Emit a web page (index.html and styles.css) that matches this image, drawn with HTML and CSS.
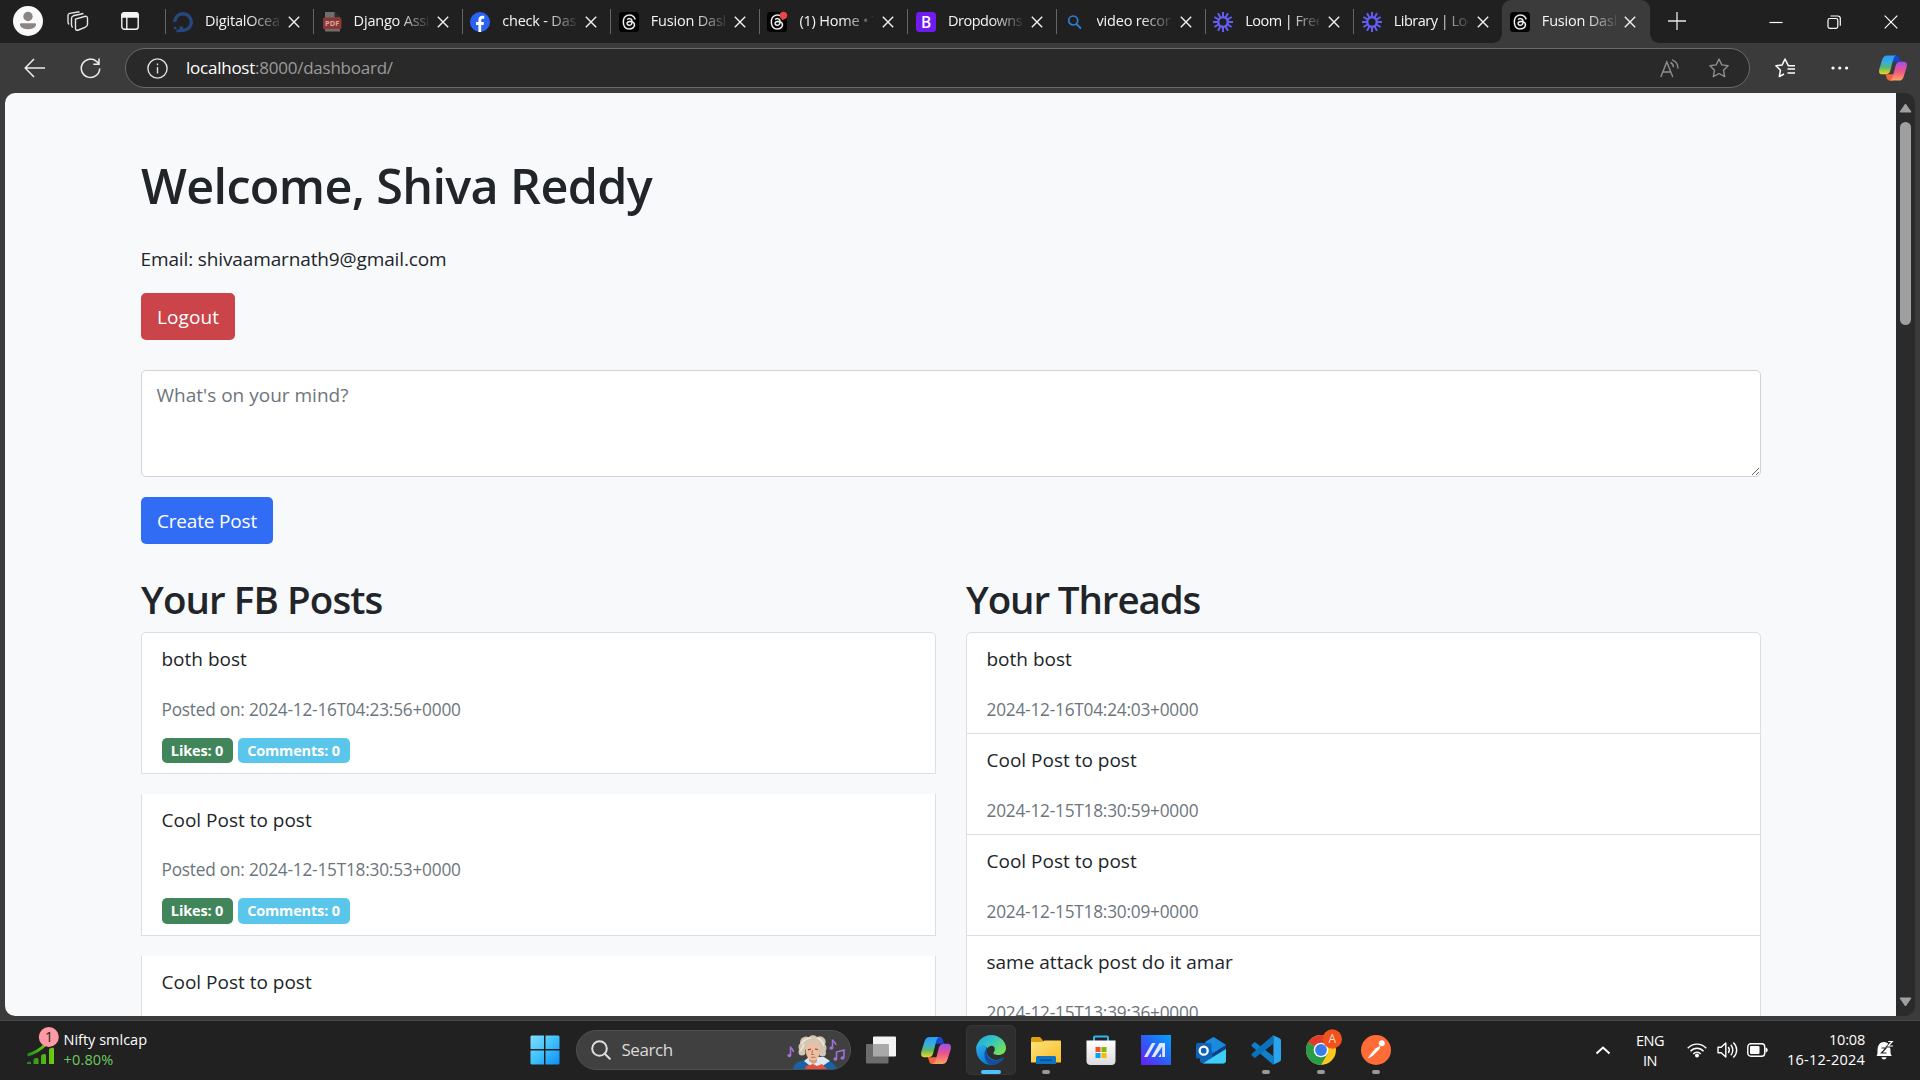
FILE: index.html
```html
<!DOCTYPE html>
<html lang="en">
<head>
<meta charset="utf-8">
<title>Fusion Dashboard</title>
<link rel="stylesheet" href="styles.css">
</head>
<body>
<svg class="defs" width="0" height="0" aria-hidden="true">
  <defs>
    <linearGradient id="cpLeft" x1="0" y1="0" x2="0" y2="1"><stop offset="0" stop-color="#2b9cf5"/><stop offset=".35" stop-color="#35aee0"/><stop offset=".65" stop-color="#5cb96b"/><stop offset="1" stop-color="#f5d61e"/></linearGradient>
    <linearGradient id="cpRight" x1="0" y1="0" x2="0" y2="1"><stop offset="0" stop-color="#9a50f0"/><stop offset=".5" stop-color="#ef5488"/><stop offset="1" stop-color="#fba55e"/></linearGradient>
    <linearGradient id="win" x1="0" y1="0" x2="1" y2="1"><stop offset="0" stop-color="#82deff"/><stop offset=".5" stop-color="#3fc1fb"/><stop offset="1" stop-color="#0d8df5"/></linearGradient>
    <linearGradient id="edTop" x1="0" y1="0" x2="1" y2=".7"><stop offset="0" stop-color="#1ba5dc"/><stop offset=".5" stop-color="#35c4c5"/><stop offset="1" stop-color="#76e352"/></linearGradient>
    <linearGradient id="edBase" x1="0" y1="0" x2=".6" y2="1"><stop offset="0" stop-color="#2fb2ee"/><stop offset="1" stop-color="#0a6fcc"/></linearGradient>
    <linearGradient id="fold" x1="0" y1="0" x2="1" y2="1"><stop offset="0" stop-color="#ffe37c"/><stop offset="1" stop-color="#f8bd27"/></linearGradient>
    <linearGradient id="mea" x1="1" y1="0" x2="0" y2="1"><stop offset="0" stop-color="#02a3fb"/><stop offset=".5" stop-color="#2a60f4"/><stop offset="1" stop-color="#6a1bfa"/></linearGradient>
    <linearGradient id="stk" x1="0" y1="0" x2="1" y2="0"><stop offset="0" stop-color="#1d8a1d"/><stop offset="1" stop-color="#6fce0d"/></linearGradient>
    <linearGradient id="bag" x1="0" y1="0" x2="0" y2="1"><stop offset="0" stop-color="#fff"/><stop offset="1" stop-color="#dcdcdc"/></linearGradient>
  </defs>
  <symbol id="threads" viewBox="0 0 20 20"><rect width="20" height="20" rx="3.500" fill="#000"/><path transform="translate(2.8 2.4) scale(.93 .95)" fill="#f4f4f4" stroke="#f4f4f4" stroke-width=".2" d="M6.321 6.016c-.27-.18-1.166-.802-1.166-.802.756-1.081 1.753-1.502 3.132-1.502.975 0 1.803.327 2.394.948s.928 1.509 1.005 2.644q.492.207.905.484c1.109.745 1.719 1.86 1.719 3.137 0 2.716-2.226 5.075-6.256 5.075C4.594 16 1 13.987 1 7.994 1 2.034 4.482 0 8.044 0 9.69 0 13.55.243 15 5.036l-1.36.353C12.516 1.974 10.163 1.43 8.006 1.43c-3.565 0-5.582 2.171-5.582 6.79 0 4.143 2.254 6.343 5.63 6.343 2.777 0 4.847-1.443 4.847-3.556 0-1.438-1.208-2.127-1.27-2.127-.236 1.234-.868 3.31-3.644 3.31-1.618 0-3.013-1.118-3.013-2.582 0-2.09 1.984-2.847 3.55-2.847.586 0 1.294.04 1.663.114 0-.637-.54-1.728-1.9-1.728-1.25 0-1.566.405-1.967.868ZM8.716 8.19c-2.04 0-2.304.87-2.304 1.416 0 .878 1.043 1.168 1.6 1.168 1.02 0 2.067-.282 2.232-2.423a6.2 6.2 0 0 0-1.528-.161"/></symbol>
  <symbol id="loom" viewBox="0 0 20 20"><g fill="none" stroke="#625df5" stroke-width="2"><path d="M10 0v6.2M10 13.8V20M0 10h6.2M13.8 10H20"/><path d="M10 0v6.2M10 13.8V20M0 10h6.2M13.8 10H20" transform="rotate(30 10 10)"/><path d="M10 0v6.2M10 13.8V20M0 10h6.2M13.8 10H20" transform="rotate(60 10 10)"/><circle cx="10" cy="10" r="4.8" stroke-width="2.200"/></g></symbol>
  <symbol id="x" viewBox="0 0 12 12"><path d="M.8.8l10.400 10.400M11.200.8L.8 11.200" fill="none" stroke="#f2f2f2" stroke-width="1.400"/></symbol>
  <symbol id="copilot" viewBox="0 0 30 27"><path d="M15 0h3.500c2.500 0 3.200 2 4.500 6.800H14z" fill="#1746d2"/><path d="M15 27h-3.500c-2.500 0-3.200-2-4.500-6.800H16z" fill="#f4643c"/><path d="M9 0h9.500c-2.500.5-3 3-4 7l-2.300 9c-1 3.500-2.700 4.300-5.700 4.300H3.300C0 20.300-.5 17.500.5 14L3.500 4.500C4.600 1.200 6 0 9 0z" fill="url(#cpLeft)"/><path d="M21 27h-9.500c2.500-.5 3-3 4-7l2.300-9c1-3.500 2.700-4.300 5.700-4.300h3.200c3.300 0 3.800 2.800 2.800 6.300l-3 9.500C25.400 25.800 24 27 21 27z" fill="url(#cpRight)"/></symbol>
</svg>

<div class="tabstrip">
  <div class="strip-tools">
    <svg width="30" height="30" viewBox="0 0 30 30"><circle cx="15" cy="15" r="15" fill="#fafafa"/><circle cx="15" cy="10.500" r="4.700" fill="#8b8684"/><path d="M8 17.200h14c1 0 1.200 1 .8 2.300C21.900 22 19 23.300 15 23.300S8.100 22 7.200 19.500c-.4-1.300-.2-2.300.8-2.300z" fill="#8b8684"/></svg>
    <svg width="22" height="20" viewBox="0 0 22 20" fill="none" stroke="#e6e6e6" stroke-width="1.400"><path d="M8.500 8.200l9-2.700c2-.6 3 0 3 1.800v6c0 1.500-.7 2.300-2 2.800l-7 2.900c-2 .8-3 0-3-1.800z"/><path d="M5.800 16.300c-1-.4-1.300-1-1.300-2.300V7.200c0-1.300.6-2 1.800-2.400L16.500 2.500"/><path d="M2.200 13.300c-.9-.5-1.200-1.200-1.200-2.300V4.500c0-1.200.5-1.800 1.700-2.100L12.500.8"/></svg>
    <svg width="18" height="18" viewBox="0 0 18 18" fill="none" stroke="#f4f4f4" stroke-width="1.400"><rect x=".8" y=".8" width="16.400" height="16.400" rx="2.500"/><path d="M1 2.800C1 1.500 1.700 1 3 1h12c1.300 0 2 .5 2 1.800V5H1z" fill="#f4f4f4"/><path d="M5.800 5v12"/></svg>
  </div>
  <div class="tabs">
    <div class="tab"><svg class="fav" viewBox="0 0 20 20"><path d="M10 18.300a8.300 8.300 0 1 0-8.300-8.300" fill="none" stroke="#26477f" stroke-width="3.400"/><path d="M6.300 14.500H10V20H6.300zM3.400 17.400h2.900v2.800H3.400zM1 14.800h2.400v2.400H1z" fill="#26477f"/></svg><span class="title">DigitalOcean</span><svg class="close"><use href="#x"/></svg></div>
    <div class="tab"><svg class="fav" viewBox="0 0 20 20"><path d="M3 0h9.500L18 5.500V19.500H3z" fill="#6e6e6e"/><path d="M12.500 0L18 5.500h-5.500z" fill="#2b2b2b"/><rect x="1" y="5.500" width="18.500" height="11.500" rx="1.500" fill="#8d3632"/><text x="10.200" y="14" text-anchor="middle" font-size="7.500" font-weight="700" fill="#cfa9a7">PDF</text></svg><span class="title">Django Assignment</span><svg class="close"><use href="#x"/></svg></div>
    <div class="tab"><svg class="fav" viewBox="0 0 20 20"><circle cx="10" cy="10" r="10" fill="#2a62f4"/><path d="M8.400 20v-6.900H6V10h2.400V8.300c0-3 1.300-4.500 4.200-4.500.5 0 1.200.1 1.600.2v2.700h-1.300c-1.300 0-1.700.5-1.700 1.800V10h2.800l-.5 3.100h-2.300V20z" fill="#fff"/></svg><span class="title">check - Dashboard</span><svg class="close"><use href="#x"/></svg></div>
    <div class="tab"><svg class="fav"><use href="#threads"/></svg><span class="title">Fusion Dashboard</span><svg class="close"><use href="#x"/></svg></div>
    <div class="tab"><svg class="fav" viewBox="0 0 20 20"><use href="#threads"/><circle cx="16.500" cy="3.500" r="3.700" fill="#ee4545"/></svg><span class="title">(1) Home • Threads</span><svg class="close"><use href="#x"/></svg></div>
    <div class="tab"><svg class="fav" viewBox="0 0 20 20"><rect width="20" height="20" rx="3.500" fill="#6f1bf2"/><text x="10" y="15.700" text-anchor="middle" font-size="15.500" font-weight="600" fill="#fff">B</text></svg><span class="title tight">Dropdowns</span><svg class="close"><use href="#x"/></svg></div>
    <div class="tab"><svg class="fav" viewBox="0 0 20 20"><circle cx="8.200" cy="8.500" r="4.500" fill="none" stroke="#2f7fd0" stroke-width="1.700"/><path d="M11.300 11.800l4.700 4.700" stroke="#2f7fd0" stroke-width="1.900"/></svg><span class="title">video recorder</span><svg class="close"><use href="#x"/></svg></div>
    <div class="tab"><svg class="fav"><use href="#loom"/></svg><span class="title tight">Loom | Free Screen</span><svg class="close"><use href="#x"/></svg></div>
    <div class="tab"><svg class="fav"><use href="#loom"/></svg><span class="title tight">Library | Loom</span><svg class="close"><use href="#x"/></svg></div>
    <div class="tab active"><svg class="fav"><use href="#threads"/></svg><span class="title">Fusion Dashboard</span><svg class="close"><use href="#x"/></svg></div>
  </div>
  <svg class="plus" width="18" height="18" viewBox="0 0 18 18"><path d="M9 0v18M0 9h18" stroke="#e8e8e8" stroke-width="1.300"/></svg>
  <div class="winctl">
    <svg width="14" height="14" viewBox="0 0 14 14"><path d="M.5 7.500h13" stroke="#fff" stroke-width="1.200"/></svg>
    <svg width="14" height="14" viewBox="0 0 14 14" fill="none" stroke="#fff" stroke-width="1.200"><rect x="1" y="3.500" width="9.800" height="9.800" rx="1.800"/><path d="M3.500 1h7.300c1.500 0 2.500 1 2.500 2.500v7.300"/></svg>
    <svg width="14" height="14" viewBox="0 0 14 14"><path d="M.7.7l12.600 12.600M13.300.7L.7 13.300" stroke="#fff" stroke-width="1.200"/></svg>
  </div>
</div>

<div class="toolbar">
  <svg class="back" width="21" height="20" viewBox="0 0 21 20" fill="none" stroke="#ededed" stroke-width="1.500"><path d="M10 1L1.200 10l8.800 9M1.200 10H21"/></svg>
  <svg class="reload" width="21" height="21" viewBox="0 0 21 21" fill="none" stroke="#ededed" stroke-width="1.500"><path d="M19.700 10.500A9.200 9.200 0 1 1 17.200 4l1.500 1.700M19 .5v5.700h-5.700"/></svg>
  <div class="address">
    <svg width="21" height="21" viewBox="0 0 21 21" fill="none" stroke="#e2e2e2" stroke-width="1.400"><circle cx="10.500" cy="10.500" r="9.600"/><path d="M10.500 9v6.500M10.500 5.500v1.700"/></svg>
    <span class="url"><b>localhost</b>:8000/dashboard/</span>
    <svg class="read" width="20" height="19" viewBox="0 0 20 19" fill="none" stroke="#8e8e8e" stroke-width="1.400"><path d="M.8 18L6.800 3l6 15M3 13h7.700M10.500 3.500c2 1 3 2.700 3 4.800M12 .8c4 1.500 6 4.400 6 8.700"/></svg>
    <svg width="20" height="20" viewBox="0 0 20 20" fill="none" stroke="#8e8e8e" stroke-width="1.400" stroke-linejoin="round"><path d="M10 1l2.800 5.900 6.300.8-4.600 4.500 1.200 6.400L10 15.500l-5.700 3.100 1.200-6.400L.9 7.700l6.300-.8z"/></svg>
  </div>
  <svg class="favs" width="21" height="20" viewBox="0 0 21 20" fill="none" stroke="#fff" stroke-width="1.500" stroke-linejoin="round"><path d="M20 7.700h-6.700L10 1 7.200 6.900l-6.300.8 4.600 4.500-1.200 6.400L9 16M12.500 11H20M12.500 15H20"/></svg>
  <svg class="dots" width="18" height="4" viewBox="0 0 18 4" fill="#fff"><circle cx="2" cy="2" r="1.600"/><circle cx="8.800" cy="2" r="1.600"/><circle cx="15.600" cy="2" r="1.600"/></svg>
  <svg class="cop" width="28" height="26"><use href="#copilot"/></svg>
</div>

<div class="viewport">
  <main class="page">
    <h1>Welcome, Shiva Reddy</h1>
    <p class="email">Email: shivaamarnath9@gmail.com</p>
    <button class="btn danger">Logout</button>
    <textarea class="composer" placeholder="What's on your mind?"></textarea>
    <button class="btn primary">Create Post</button>
    <div class="columns">
      <section>
        <h2>Your FB Posts</h2>
        <ul class="list posts">
          <li><p>both bost</p><small>Posted on: 2024-12-16T04:23:56+0000</small><div class="badges"><span class="badge likes">Likes: 0</span><span class="badge comments">Comments: 0</span></div></li>
          <li><p>Cool Post to post</p><small>Posted on: 2024-12-15T18:30:53+0000</small><div class="badges"><span class="badge likes">Likes: 0</span><span class="badge comments">Comments: 0</span></div></li>
          <li><p>Cool Post to post</p></li>
        </ul>
      </section>
      <section>
        <h2 class="narrow">Your Threads</h2>
        <ul class="list threads">
          <li><p>both bost</p><small>2024-12-16T04:24:03+0000</small></li>
          <li><p>Cool Post to post</p><small>2024-12-15T18:30:59+0000</small></li>
          <li><p>Cool Post to post</p><small>2024-12-15T18:30:09+0000</small></li>
          <li><p>same attack post do it amar</p><small>2024-12-15T13:39:36+0000</small></li>
        </ul>
      </section>
    </div>
  </main>
  <div class="scrollbar">
    <svg width="13" height="10" viewBox="0 0 13 10"><path d="M6.500 1L12 9H1z" fill="#a0a0a0" stroke="#a0a0a0" stroke-linejoin="round"/></svg>
    <div class="thumb"></div>
    <svg width="13" height="10" viewBox="0 0 13 10"><path d="M6.500 9L12 1H1z" fill="#a0a0a0" stroke="#a0a0a0" stroke-linejoin="round"/></svg>
  </div>
</div>

<footer class="taskbar">
  <div class="widget">
    <svg width="34" height="38" viewBox="0 0 34 38"><path d="M1.500 28C9 26 15 22 20 17" fill="none" stroke="url(#stk)" stroke-width="3"/><path d="M1 37v-1c0-1.500 4-2 4 0v1zM7.500 37v-4c0-2 5-3 5-.5V37zM15 37v-8c0-2 5-3 5-.5V37zM23 37V22.500c0-1.500 5-3 5-.5v15z" fill="url(#stk)"/><circle cx="22.800" cy="10" r="10" fill="#ff99a4"/><text x="23" y="15" text-anchor="middle" font-size="14" fill="#222">1</text></svg>
    <div class="quote"><span>Nifty smlcap</span><span class="up">+0.80%</span></div>
  </div>
  <svg class="start" width="30" height="30" viewBox="0 0 30 30"><path d="M1.500.5H14V14H.5V1.500zM15.500.5h13l1 1V14h-14zM.5 15.500H14v14H1.500l-1-1zM15.500 15.500h14v13l-1 1h-13z" fill="url(#win)"/></svg>
  <div class="search">
    <svg width="20" height="20" viewBox="0 0 20 20" fill="none" stroke="#dedede" stroke-width="2"><circle cx="8.500" cy="8.500" r="7.300"/><path d="M13.800 13.800l5 5" stroke-linecap="round"/></svg>
    <span>Search</span>
    <svg class="composerpic" width="58" height="34" viewBox="0 0 58 34">
      <path d="M6 34c1-6 6-8 12-9h20c6 1 10 4 12 9z" fill="#1763a4"/><path d="M17 26l10 8h4l12-8-6-4H22z" fill="#dce9f4"/><path d="M19 31l7-2 4 2 5-2 5 5H18z" fill="#e4503a"/>
      <g fill="#d3c6b2"><circle cx="19" cy="7.500" r="6"/><circle cx="26" cy="5" r="4.800"/><circle cx="33" cy="7" r="5.700"/><circle cx="35.500" cy="13" r="4"/><circle cx="15.500" cy="12" r="4"/><circle cx="15" cy="17" r="3.500"/><circle cx="35.500" cy="18" r="3.500"/></g>
      <path d="M14 9c3-4 6-6 10-6M30 3c4 1 6 4 7 8M13 16c2-2 3-4 4-7" stroke="#efe8da" stroke-width="1.500" fill="none"/>
      <path d="M22 22h8v5l-4 2-4-3z" fill="#d69c7c"/>
      <path d="M19 12c1-3 4-4 7-3.500 4-1.500 6.500 1 6.500 4V18c0 4-3 7.500-6.300 7.500S19.500 22 19 18z" fill="#edbea0"/><path d="M21 14.800l3-.8M28 14l3 .5" stroke="#6b4a38" stroke-width="1.200"/><path d="M25.500 15l-.8 4.500h2.300M24 22.300h4.500" stroke="#b96c55" fill="none"/>
      <g fill="none" stroke="#a36fdb" stroke-width="1.500"><path d="M3.500 20v-8.500c0 2 3 2.500 3 5.500M45.500 13V4.500c0 2 3.300 2.500 3.300 5.500M49.500 23.500v-6.500l7.500-2v7.500"/></g><g fill="#a36fdb"><ellipse cx="2.400" cy="20.500" rx="2" ry="1.700"/><ellipse cx="44.400" cy="13" rx="2" ry="1.700"/><ellipse cx="48.400" cy="24" rx="2" ry="1.700"/><ellipse cx="55.500" cy="23" rx="2" ry="1.700"/></g>
    </svg>
  </div>
  <div class="apps">
    <div class="app"><svg width="30" height="28" viewBox="0 0 30 28"><rect x="7" y=".5" width="23" height="20" rx="1" fill="#f4f4f4"/><rect x="0" y="8" width="22.500" height="19.500" rx="1" fill="#6c6c6c"/><path d="M7 8h15.500v12.500H7z" fill="#a9a9a9"/></svg></div>
    <div class="app"><svg width="30" height="27"><use href="#copilot"/></svg></div>
    <div class="app focus"><svg width="30" height="30" viewBox="0 0 30 30"><path d="M.3 12C1 7 6 6 11 8c-2 6-1 13 5 16 5 2.500 9 0 12-2-3 5-7.500 8-13 8C6 30-.8 22 .3 12z" fill="url(#edBase)"/><path d="M11.200 13C9 19 13 25.500 20 25.500c3 0 6-1.500 7.500-2.800.5-.3.700 0 .4.500-3 4.500-7.500 6.600-12 6.800-7-1-10-13-4.700-17z" fill="#114f9e"/><path d="M.3 13C1.500 5 8 0 15 0c8.500 0 15 6.500 15 13 0 4.500-3.500 7-7.500 7-3.500 0-5.500-1.200-5-2.300.5-1.200 1.500-1.700 1.300-4.200C18.500 11.300 16.500 10.500 14.500 11c-1.800.5-3 1.500-3.500 3C10.500 10 7 8 .3 13z" fill="url(#edTop)"/></svg></div>
    <div class="app open"><svg width="30" height="28" viewBox="0 0 30 28"><path d="M0 3C0 1.500 1 1 2 1h7l3 3.500V9H0z" fill="#e0a00c"/><path d="M0 6h11l2.500-1.500H29c.7 0 1 .3 1 1V26.500H0z" fill="url(#fold)"/><path d="M5 28v-6c0-1.500.8-2 2-2h16c1.300 0 2 .5 2 2v6z" fill="#0f73c4"/><path d="M9 24.200h12" stroke="#0a4f94" stroke-width="1.500"/></svg></div>
    <div class="app"><svg width="30" height="30" viewBox="0 0 30 30"><path d="M8 7V2.500c0-.7.300-1 1-1h12c.7 0 1 .3 1 1V7" fill="none" stroke="#2fb5ee" stroke-width="2"/><path d="M.5 5.500h29V26c0 2.500-1.500 4-4 4h-21c-2.500 0-4-1.500-4-4z" fill="url(#bag)"/><path d="M9.500 12h5v5h-5z" fill="#f25022"/><path d="M15.500 12h5v5h-5z" fill="#7fba00"/><path d="M9.500 18h5v5h-5z" fill="#00a4ef"/><path d="M15.500 18h5v5h-5z" fill="#ffb900"/></svg></div>
    <div class="app"><svg width="30" height="30" viewBox="0 0 30 30"><path d="M0 0h30v30H0z" fill="url(#mea)"/><path d="M3 22L11 8h3.500L6.500 22zM10.500 22l8-14H24v14h-2.800V11.500L14 22z" fill="#dfe8ff"/><path d="M17.500 22l2.500-3.500V22z" fill="#dfe8ff"/></svg></div>
    <div class="app"><svg width="30" height="28" viewBox="0 0 30 28"><path d="M4 10L17.500 1 30 9v15c0 2-1 3.500-3 3.500H8c-2 0-4-1-4-3z" fill="#1266b8"/><path d="M9 6l8.500-5L30 9 17 17z" fill="#1a8ade"/><path d="M16 18l14-9v5L17 22z" fill="#0b3f84"/><path d="M30 13v11c0 2-1 3.500-3 3.500H7L17 21z" fill="#3fcdf5"/><rect x="0" y="7" width="15.500" height="15.500" rx="1.500" fill="#0e62b8"/><circle cx="7.700" cy="14.700" r="4" fill="none" stroke="#fff" stroke-width="2.300"/></svg></div>
    <div class="app open"><svg width="30" height="30" viewBox="0 0 30 30"><path d="M1 9.500l2-2c.5-.4 1-.4 1.500 0L22 21v8.500L1 11.500c-.6-.6-.6-1.400 0-2z" fill="#0f7fcb"/><path d="M1 20.500l2 2c.5.400 1 .4 1.500 0L22 9V.5L1 18.500c-.6.600-.6 1.400 0 2z" fill="#0a72bd"/><path d="M21.500 0L28 3c1.300.6 2 1.300 2 2.800v18.400c0 1.500-.7 2.200-2 2.800l-6.500 3c1-.8.900-1.500.9-3V3c0-1.500.1-2.200-.9-3z" fill="#29a5f0"/></svg></div>
    <div class="app open"><svg class="chrome" width="36" height="36" viewBox="0 0 36 36"><circle cx="15" cy="21" r="15" fill="#fcc81e"/><path d="M15 21L2 13.500A15 15 0 0 1 28 13.500z" fill="#e23b2e"/><path d="M15 21L2 13.500A15 15 0 0 0 15 36l6.500-11.300z" fill="#2a9b47"/><circle cx="15" cy="21" r="7.300" fill="#fff"/><circle cx="15" cy="21" r="5.900" fill="#3b7de8"/><circle cx="26.300" cy="10" r="9.700" fill="#f1511b"/><text x="26.300" y="14.300" text-anchor="middle" font-size="12" fill="#fbdccf">A</text></svg></div>
    <div class="app open"><svg width="30" height="30" viewBox="0 0 30 30"><circle cx="15" cy="15" r="15" fill="#ff6c37"/><circle cx="20.800" cy="8.300" r="3" fill="#fff"/><path d="M19.500 10.500l-5 3-5.500 6.500-2.500 3.500c3-.5 5-2.500 7-4.500l5-5z" fill="#fff"/></svg></div>
  </div>
  <div class="tray">
    <svg width="16" height="9" viewBox="0 0 16 9"><path d="M1.500 7.500L8 1.500l6.500 6" fill="none" stroke="#fff" stroke-width="2"/></svg>
    <div class="lang"><span>ENG</span><span>IN</span></div>
    <svg class="wifi" width="20" height="16" viewBox="0 0 20 16" fill="none" stroke="#fff" stroke-width="1.400"><path d="M.7 6.200c5.200-5.500 13.400-5.500 18.600 0M3.500 9.200c3.600-4 9.400-4 13 0M6.300 12c2-2.500 5.400-2.500 7.400 0"/><circle cx="10" cy="13.500" r="1.300" fill="#fff"/></svg>
    <svg class="vol" width="21" height="18" viewBox="0 0 21 18" fill="none" stroke="#fff" stroke-width="1.400" stroke-linejoin="round"><path d="M1 6.200h3.200L8.800 2v14l-4.600-4.200H1z"/><path d="M11.300 6c1.300 1.800 1.300 4.200 0 6M13.800 3.800c2.700 3 2.700 7.400 0 10.400M16.300 1.500c4.500 4.200 4.500 10.800 0 15"/></svg>
    <svg class="bat" width="21" height="14" viewBox="0 0 21 14"><rect x=".8" y=".8" width="16.900" height="12.400" rx="3" fill="none" stroke="#fff" stroke-width="1.400"/><rect x="3" y="3" width="9.500" height="8" rx="1" fill="#fff"/><path d="M18.500 4.500c3 .5 3 4.500 0 5z" fill="#fff"/></svg>
    <div class="clock"><span class="time">10:08</span><span>16-12-2024</span></div>
    <svg width="18" height="20" viewBox="0 0 18 20"><path d="M.5 16c1-1.300 1-2.700 1-5C1.500 5 4 2 8 2c4.500 0 6.500 3.500 6.500 9 0 2.300 0 3.700 1.500 5z" fill="#fff"/><path d="M5.500 17.200h5c-.5 3-4.500 3-5 0z" fill="#fff"/><path d="M5.500 8h4.500L5.500 13h5" fill="none" stroke="#222" stroke-width="1.200"/><path d="M12.200 1.500h4L12.200 6H17" fill="none" stroke="#222" stroke-width="2.800"/><path d="M12.200 1.500h4L12.200 6H17" fill="none" stroke="#fff" stroke-width="1.200"/></svg>
  </div>
</footer>
</body>
</html>
```

FILE: styles.css
```css
* { box-sizing: border-box; }

body {
  margin: 0;
  width: 1920px;
  height: 1080px;
  overflow: hidden;
  display: flex;
  flex-direction: column;
  background: #3b3b3b;
  color: #212529;
  font-family: "Open Sans", "Noto Sans", sans-serif;
  font-size: 19px;
  line-height: 30px;
}

svg { display: block; flex: none; }
.defs { position: absolute; }
h1, h2, p, ul { margin: 0; padding: 0; }

/* Tab strip */
.tabstrip {
  height: 43px;
  flex: none;
  display: flex;
  background: #202020;
}
.strip-tools {
  width: 164.500px;
  flex: none;
  display: flex;
  align-items: center;
  padding: 0 0 1px 13px;
}
.strip-tools svg:nth-child(2) { margin-left: 24px; }
.strip-tools svg:nth-child(3) { margin-left: 32px; }
.tabs { display: flex; flex: none; }
.tab {
  width: 148.600px;
  height: 43px;
  display: flex;
  align-items: center;
  padding-left: 8.500px;
  position: relative;
}
.tab::before {
  content: "";
  position: absolute;
  left: 0;
  top: 9px;
  width: 1px;
  height: 25px;
  background: #666;
}
.fav { width: 20px; height: 20px; margin-top: 1px; overflow: visible; }
.title {
  width: 74px;
  margin-left: 12px;
  padding-bottom: 1px;
  overflow: hidden;
  white-space: nowrap;
  color: #f5f5f5;
  font-size: 14.500px;
  line-height: 20px;
  letter-spacing: -0.200px;
  -webkit-mask-image: linear-gradient(90deg, #000 44px, transparent 78px);
  mask-image: linear-gradient(90deg, #000 44px, transparent 78px);
}
.title.tight { letter-spacing: -0.500px; }
.close { width: 12px; height: 12px; margin: 1px 0 0 9px; }
.tab.active { background: #3b3b3b; border-radius: 9px 9px 0 0; padding-left: 8px; }
.tab.active .close { margin-left: 8px; }
.tab.active::before,
.tab.active::after {
  content: "";
  position: absolute;
  top: auto;
  bottom: 0;
  width: 9px;
  height: 9px;
}
.tab.active::before { left: -9px; background: radial-gradient(circle at 0 0, transparent 8.500px, #3b3b3b 9px); }
.tab.active::after { right: -9px; background: radial-gradient(circle at 100% 0, transparent 8.500px, #3b3b3b 9px); }
.plus { margin: 12px 0 0 17.500px; }
.winctl {
  flex: 1;
  display: flex;
  justify-content: flex-end;
  align-items: center;
  gap: 43.500px;
  padding-right: 22px;
}

/* Toolbar */
.toolbar {
  height: 50px;
  flex: none;
  display: flex;
  align-items: center;
  padding: 0 13px 0 24px;
  background: #3b3b3b;
}
.reload { margin-left: 35px; }
.address {
  width: 1625px;
  height: 40px;
  margin-left: 24px;
  display: flex;
  align-items: center;
  padding: 0 20px 0 21px;
  background: #292929;
  border: 1px solid #6a6a6a;
  border-radius: 20px;
}
.url {
  flex: 1;
  margin-left: 18px;
  padding-bottom: 1px;
  color: #9b9b9b;
  font-size: 17px;
  letter-spacing: -0.240px;
}
.url b { color: #fff; font-weight: 400; }
.read { margin-right: 29px; }
.favs { margin-left: 25px; }
.dots { margin-left: 35px; }
.cop { margin-left: auto; }

/* Viewport */
.viewport {
  height: 923px;
  margin: 0 5px;
  flex: none;
  display: flex;
  overflow: hidden;
  border-radius: 10px;
  background: #2b2b2b;
}
.page {
  width: 1891px;
  padding: 62px 135px 0 136px;
  background: #f8f9fb;
  overflow: hidden;
}
h1 {
  font-size: 48.500px;
  font-weight: 600;
  line-height: 60px;
  letter-spacing: -0.640px;
}
.email { margin: 29px -1px 19px; padding-left: 0.500px; letter-spacing: -0.127px; }
.btn {
  display: block;
  height: 47px;
  margin: 0;
  padding: 8.500px 0 7px;
  border: 0;
  border-radius: 5px;
  color: #fff;
  font: inherit;
  line-height: 30px;
}
.danger { width: 94px; background: #cb444a; letter-spacing: 0.080px; }
.primary { width: 132px; background: #316cf4; letter-spacing: -0.180px; }
.composer {
  display: block;
  width: 1620px;
  height: 107px;
  margin: 30px 0 20px;
  padding: 8.500px 14.500px;
  background: #fff;
  border: 1px solid #ced4da;
  border-radius: 5px;
  outline: 0;
  font: inherit;
}
.composer::placeholder { color: #6c757d; }
.columns {
  display: grid;
  grid-template-columns: 795px 795px;
  gap: 30px;
  margin-top: 30.500px;
}
h2 {
  margin-bottom: 9.500px;
  font-size: 38.500px;
  font-weight: 600;
  line-height: 48px;
  letter-spacing: -0.900px;
}
h2.narrow { letter-spacing: -1.100px; }
.list { list-style: none; }
.list li {
  padding: 11px 20px 0 19.500px;
  background: #fff;
  border: 1px solid #dcdee0;
  border-top: 0;
}
.list li:first-child { border-top: 1px solid #dcdee0; border-radius: 5px 5px 0 0; }
.list small {
  display: block;
  margin-top: 20.700px;
  color: #6c757d;
  font-size: 17.250px;
  letter-spacing: -0.220px;
}
.posts li { height: 141.800px; margin-bottom: 20px; }
.threads li { height: 101.200px; }
.threads li:first-child { height: 102px; }
.badges { display: flex; gap: 5px; margin-top: 13px; }
.badge {
  height: 25.500px;
  border-radius: 5px;
  color: #fff;
  font-size: 14.500px;
  font-weight: 700;
  line-height: 25px;
  text-align: center;
  letter-spacing: -0.160px;
}
.likes { width: 71px; background: #41855a; }
.comments { width: 112px; background: #5bc6ec; }

.scrollbar {
  width: 19px;
  display: flex;
  flex-direction: column;
  align-items: center;
  padding: 10px 0 9px;
}
.thumb { width: 11px; height: 203px; margin: 9px 0 auto; border-radius: 6px; background: #9f9f9f; }

/* Taskbar */
.taskbar {
  height: 60px;
  margin-top: auto;
  padding-bottom: 1px;
  flex: none;
  display: flex;
  align-items: center;
  background: #212121;
  border-top: 1px solid #474747;
  color: #fff;
  font-size: 14.500px;
  line-height: 20px;
}
.widget {
  width: 529.500px;
  flex: none;
  display: flex;
  align-items: center;
  padding-left: 25.500px;
}
.widget svg { margin-bottom: 8px; }
.quote { display: flex; flex-direction: column; margin-left: 4px; padding-bottom: 1px; }
.up { color: #6ccb5f; letter-spacing: 0.170px; }
.search {
  width: 275px;
  height: 40px;
  margin-left: 16px;
  display: flex;
  align-items: center;
  padding: 0 5px 0 14px;
  border: 1px solid #505050;
  border-radius: 20px;
  background: #404040;
  color: #dadada;
  font-size: 17px;
}
.search span { margin-left: 11px; letter-spacing: -0.450px; }
.composerpic { margin: 3px 0 0 auto; }
.apps { display: flex; margin-left: 2.500px; }
.app {
  width: 50px;
  height: 50px;
  margin: 0 2.500px;
  display: flex;
  align-items: center;
  justify-content: center;
  position: relative;
  border-radius: 5px;
}
.app.focus { background: #2e2e2e; border: 1px solid #363636; }
.app.focus::after,
.app.open::after {
  content: "";
  position: absolute;
  left: 21px;
  bottom: 1px;
  width: 8px;
  height: 4px;
  border-radius: 2px;
  background: #999;
}
.app.focus::after { left: 14px; bottom: 0; width: 20px; background: #4cc2ff; }
.chrome { margin: 0 -6px 6px 0; }
.tray {
  flex: 1;
  display: flex;
  justify-content: flex-end;
  align-items: center;
  padding-right: 26px;
}
.lang { display: flex; flex-direction: column; align-items: center; margin: 0 23px 0 25px; padding-top: 1px; letter-spacing: -0.500px; }
.vol { margin-left: 10px; }
.bat { margin-left: 9px; }
.clock {
  display: flex;
  flex-direction: column;
  align-items: flex-end;
  margin: 0 11px 1px 19px;
  letter-spacing: 0.230px;
}
.time { letter-spacing: -0.190px; }
```
